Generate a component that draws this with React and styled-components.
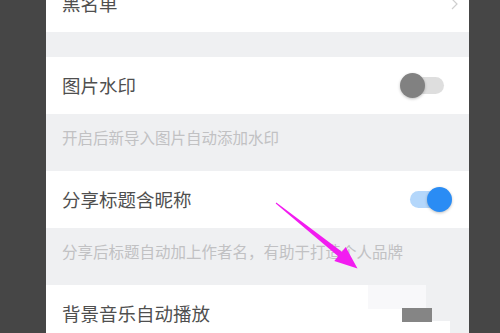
import React from "react";
import styled, { createGlobalStyle } from "styled-components";

const Global = createGlobalStyle`
  html, body { margin: 0; padding: 0; background: #464646; }
  body { font-family: "Noto Sans CJK SC", "Noto Sans", sans-serif; }
`;

const Frame = styled.div`
  position: relative;
  width: 500px;
  height: 333px;
  overflow: hidden;
  background: #464646;
  display: flex;
`;

const Screen = styled.div`
  margin-left: 46px;
  width: 423px;
  background: #eff0f2;
  display: flex;
  flex-direction: column;
  margin-top: -25px;
`;

const Row = styled.div`
  position: relative;
  flex: none;
  height: 57px;
  background: #ffffff;
  display: flex;
  align-items: center;
  justify-content: space-between;
  padding: 0 25px 0 16px;
  box-sizing: border-box;
`;

const Title = styled.span`
  font-size: 18.5px;
  color: #4f4f4f;
  line-height: 1;
`;

const Gap = styled.div`
  flex: none;
  height: ${(p) => p.$h}px;
`;

const Desc = styled.div`
  flex: none;
  height: 57px;
  box-sizing: border-box;
  padding: 13px 0 0 16px;
  font-size: 15.5px;
  line-height: 20px;
  color: #c1c1c3;
`;

const Track = styled.div`
  position: relative;
  width: 34px;
  height: 17px;
  border-radius: 9px;
  background: ${(p) => (p.$on ? "#b4d7fb" : "#dedede")};
`;

const Knob = styled.div`
  position: absolute;
  top: -4px;
  left: ${(p) => (p.$on ? "17px" : "-10px")};
  width: 25px;
  height: 25px;
  border-radius: 50%;
  background: ${(p) => (p.$on ? "#2a8cf4" : "#818181")};
  box-shadow: 0 1px 3px rgba(0, 0, 0, 0.25);
`;

const Chevron = styled.svg`
  width: 7px;
  height: 12px;
  margin-right: -14px;
`;

const Patch = styled.div`
  position: absolute;
  left: ${(p) => p.$x}px;
  top: ${(p) => p.$y}px;
  width: ${(p) => p.$w}px;
  height: ${(p) => p.$h}px;
  background: ${(p) => p.$c};
`;

const ArrowLayer = styled.svg`
  position: absolute;
  left: 0;
  top: 0;
  width: 500px;
  height: 333px;
  pointer-events: none;
`;

function Toggle({ on }) {
  return (
    <Track $on={on}>
      <Knob $on={on} />
    </Track>
  );
}

export default function App() {
  return (
    <>
      <Global />
      <Frame>
        <Screen>
          <Row>
            <Title>黑名单</Title>
            <Chevron viewBox="0 0 7 12">
              <path d="M1 1 L6 6 L1 11" fill="none" stroke="#cfcfcf" strokeWidth="1.2" />
            </Chevron>
          </Row>
          <Gap $h={25} />
          <Row>
            <Title>图片水印</Title>
            <Toggle on={false} />
          </Row>
          <Desc>开启后新导入图片自动添加水印</Desc>
          <Row>
            <Title>分享标题含昵称</Title>
            <Toggle on={true} />
          </Row>
          <Desc>分享后标题自动加上作者名，有助于打造个人品牌</Desc>
          <Row>
            <Title>背景音乐自动播放</Title>
            <Patch $x={322} $y={0} $w={58} $h={24} $c="#f8f8fa" />
            <Patch $x={380} $y={0} $w={43} $h={36} $c="#eff0f2" />
            <Patch $x={404} $y={36} $w={19} $h={21} $c="#eff0f2" />
            <Patch $x={356} $y={23} $w={30} $h={14} $c="#858585" />
          </Row>
        </Screen>
        <ArrowLayer viewBox="0 0 500 333">
          <polygon
            points="275.7,203.4 338.1,256.3 334.3,261 357.5,268.5 345.7,247 341.9,251.7 276.3,202.6"
            fill="#f21cf0"
          />
        </ArrowLayer>
      </Frame>
    </>
  );
}
